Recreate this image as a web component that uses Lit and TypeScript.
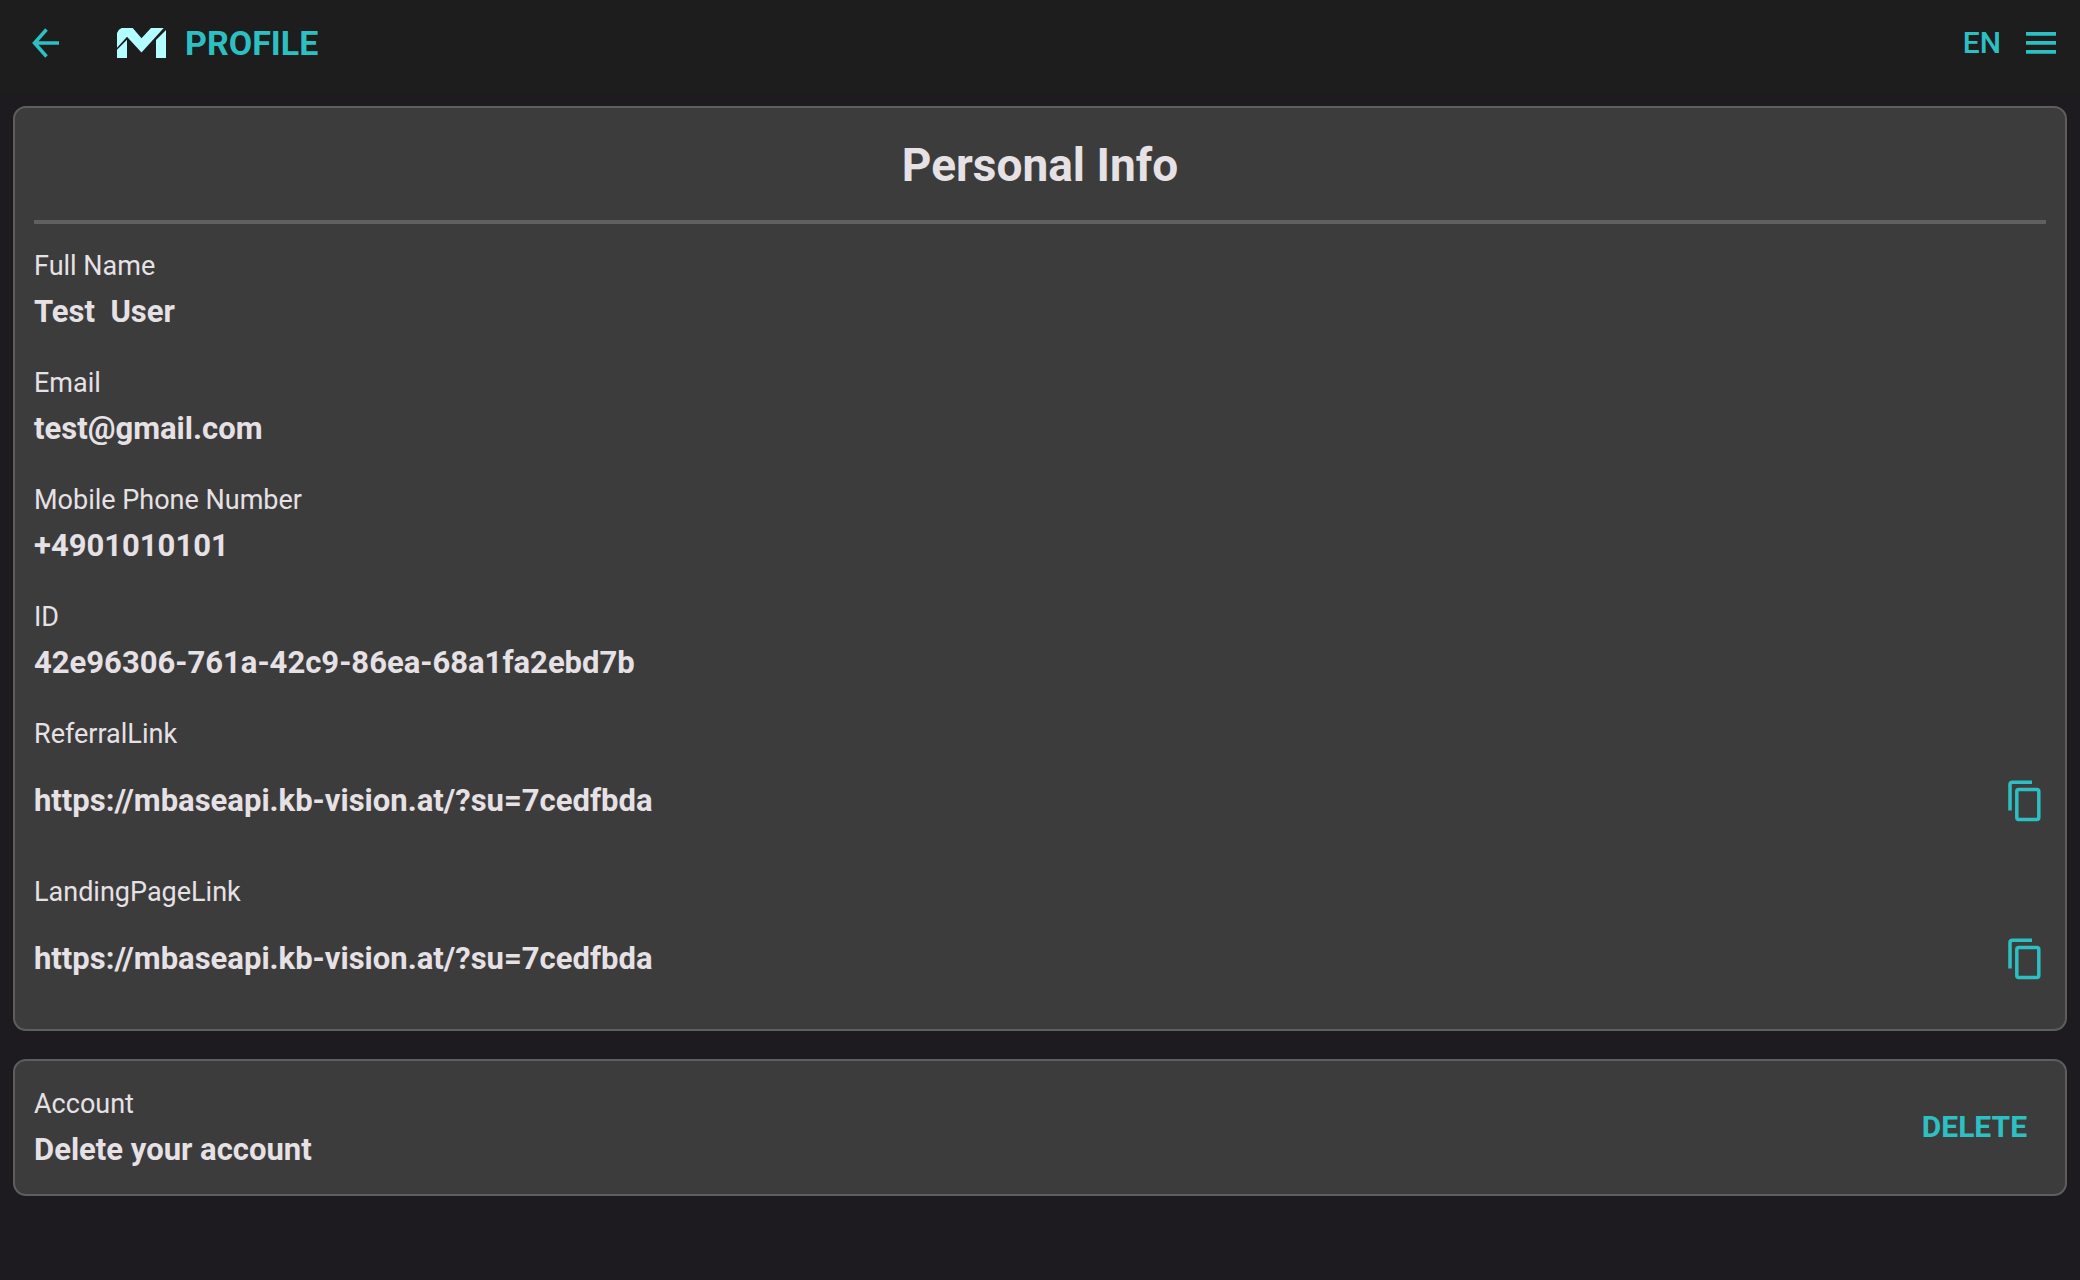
import { LitElement, html, css } from "lit";
import { customElement, property } from "lit/decorators.js";

interface Field {
  label: string;
  value: string;
  copyable?: boolean;
}

const FIELDS: Field[] = [
  { label: "Full Name", value: "Test  User" },
  { label: "Email", value: "test@gmail.com" },
  { label: "Mobile Phone Number", value: "+4901010101" },
  { label: "ID", value: "42e96306-761a-42c9-86ea-68a1fa2ebd7b" },
  { label: "ReferralLink", value: "https://mbaseapi.kb-vision.at/?su=7cedfbda", copyable: true },
  { label: "LandingPageLink", value: "https://mbaseapi.kb-vision.at/?su=7cedfbda", copyable: true },
];

@customElement("profile-header")
export class ProfileHeader extends LitElement {
  static styles = css`
    :host { display: block; }
    .bar {
      display: flex;
      align-items: center;
      box-sizing: border-box;
      height: 94px;
      padding: 0 24px 8px 32px;
      background: #1d1d1d;
      color: #2dc0c2;
    }
    button {
      display: flex;
      align-items: center;
      padding: 0;
      border: 0;
      background: none;
      color: inherit;
      font: inherit;
      cursor: pointer;
    }
    svg { display: block; }
    .logo { margin-left: 58px; }
    .title { flex: 1; margin: 0 0 0 19px; font-size: 34px; line-height: 44px; font-weight: 700; }
    .lang { font-size: 30px; line-height: 40px; font-weight: 500; margin-right: 25px; }
  `;

  render() {
    return html`
      <header class="bar">
        <button aria-label="Back">
          <svg width="27" height="30" viewBox="0 0 27 30" fill="none" stroke="currentColor" stroke-width="3.500">
            <path d="M14.500 1.500 2.500 15 14.500 28.500M3 15H27" />
          </svg>
        </button>
        <svg class="logo" width="49" height="30" viewBox="0 0 49 30" fill="#b3ffff" aria-hidden="true">
          <path d="M0 19.700V5Q1.500 1.200 4.700 0H15.700L24.500 10.300 34 0H46.700L24.500 24.600 10 8.700Z" />
          <path d="M0 21.700 10 11.700V30H0ZM39 12 49 2V30H39Z" />
        </svg>
        <h1 class="title">PROFILE</h1>
        <button class="lang" aria-label="Language: EN">EN</button>
        <button aria-label="Menu">
          <svg width="30" height="22" viewBox="0 0 30 22" fill="currentColor">
            <path d="M0 0H30V3.700H0ZM0 9H30V12.700H0ZM0 18H30V21.700H0Z" />
          </svg>
        </button>
      </header>
    `;
  }
}

@customElement("profile-field")
export class ProfileField extends LitElement {
  @property() label = "";
  @property() value = "";
  @property({ type: Boolean }) copyable = false;

  static styles = css`
    :host { display: block; }
    .field { margin: 0; }
    .label { font-size: 27px; line-height: 46px; }
    .value {
      display: flex;
      align-items: center;
      justify-content: space-between;
      margin: 0;
      font-size: 31px;
      line-height: 46px;
      font-weight: 700;
    }
    .text { white-space: pre-wrap; overflow-wrap: anywhere; }
    .tall { min-height: 87px; }
    .copy { padding: 4px; border: 0; background: none; color: #2dc0c2; cursor: pointer; }
    .copy svg { display: block; }
  `;

  render() {
    return html`
      <dl class="field">
        <dt class="label">${this.label}</dt>
        <dd class="value ${this.copyable ? "tall" : ""}">
          <span class="text">${this.value}</span>
          ${this.copyable
            ? html`<button class="copy" aria-label="Copy ${this.label}" @click=${this.copy}>
                <svg width="34" height="42" viewBox="0 0 34 42" fill="none" stroke="currentColor" stroke-width="3.500">
                  <path d="M2 30.500V4.500Q2 2.200 4.300 2.200H24" />
                  <rect x="8.800" y="9.500" width="22" height="30" rx="2" />
                </svg>
              </button>`
            : null}
        </dd>
      </dl>
    `;
  }

  private copy() {
    navigator.clipboard?.writeText(this.value);
  }
}

@customElement("app-root")
export class AppRoot extends LitElement {
  static styles = css`
    :host {
      display: block;
      min-height: 100vh;
      background: #1d1b20;
      color: #e6e1e5;
      font-family: Roboto, "Liberation Sans", sans-serif;
    }
    .content { display: flex; flex-direction: column; gap: 28px; padding: 12px 13px; }
    .card {
      box-sizing: border-box;
      padding: 0 19px;
      border: 2px solid #5e5e5e;
      border-radius: 13px;
      background: #3c3c3c;
    }
    .heading {
      margin: 0 0 19px;
      padding: 26px 0 24px;
      border-bottom: 4px solid #606060;
      text-align: center;
      font-size: 46px;
      line-height: 62px;
      font-weight: 700;
    }
    .fields { display: flex; flex-direction: column; gap: 25px; padding-bottom: 27px; }
    .account { display: flex; align-items: center; justify-content: space-between; padding-top: 20px; padding-bottom: 21px; }
    .delete {
      padding: 8px 19px;
      border: 0;
      background: none;
      color: #2dc0c2;
      font: inherit;
      font-size: 30px;
      line-height: 40px;
      font-weight: 700;
      cursor: pointer;
    }
  `;

  render() {
    return html`
      <profile-header></profile-header>
      <main class="content">
        <section class="card">
          <h2 class="heading">Personal Info</h2>
          <div class="fields">
            ${FIELDS.map(
              (f) => html`<profile-field .label=${f.label} .value=${f.value} .copyable=${!!f.copyable}></profile-field>`
            )}
          </div>
        </section>
        <section class="card account">
          <profile-field label="Account" value="Delete your account"></profile-field>
          <button class="delete">DELETE</button>
        </section>
      </main>
    `;
  }
}
